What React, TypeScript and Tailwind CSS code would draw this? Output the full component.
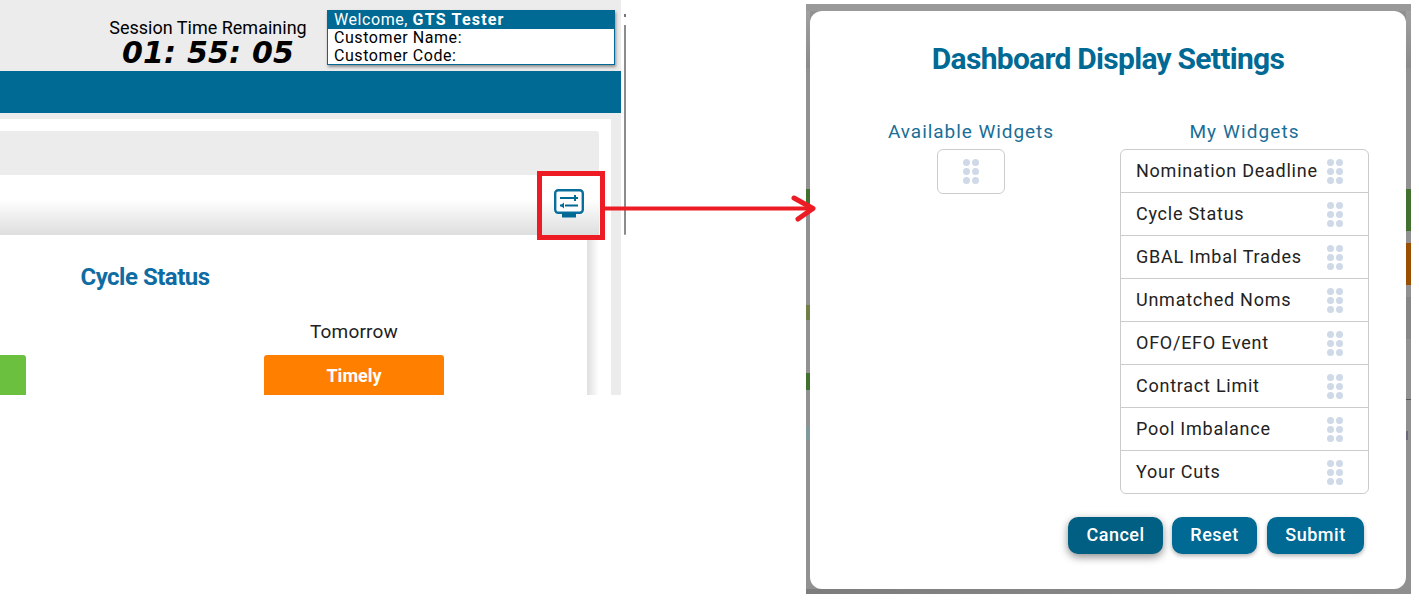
const widgets = [
  "Nomination Deadline",
  "Cycle Status",
  "GBAL Imbal Trades",
  "Unmatched Noms",
  "OFO/EFO Event",
  "Contract Limit",
  "Pool Imbalance",
  "Your Cuts",
];

function DragDots() {
  return (
    <div className="grid grid-cols-2 gap-[2px]">
      {[0, 1, 2, 3, 4, 5].map((i) => (
        <span key={i} className="block h-[7px] w-[7px] rounded-full bg-[#cfd9e8]" />
      ))}
    </div>
  );
}

function DisplayIcon() {
  return (
    <svg width="30" height="30" viewBox="0 0 30 30" fill="none">
      <rect x="1.2" y="1.2" width="27.6" height="22.6" rx="3" fill="#fff" stroke="#0a6e9c" strokeWidth="2.4" />
      <rect x="8" y="24" width="14" height="4.5" rx="0.5" fill="#006994" />
      <path d="M6 9h14M6 16.5h3M11 16.5h13" stroke="#006994" strokeWidth="2" />
      <path d="M21 6v6" stroke="#006994" strokeWidth="2" />
      <path d="M22 9h2" stroke="#006994" strokeWidth="2" />
      <path d="M10 13.5v6L6.5 16.5z" fill="#006994" />
    </svg>
  );
}

function PortalCapture() {
  return (
    <div className="flex h-[395px] w-[621px] flex-col bg-[#ececec] font-['Roboto',sans-serif]">
      <div className="flex h-[71px] items-start justify-end pr-[6px] pt-[10px]">
        <div className="mr-[19px] flex w-[200px] flex-col items-center text-black">
          <div className="mt-[7px] text-[18px] leading-[21px]">Session Time Remaining</div>
          <div className="font-['DejaVu_Sans',sans-serif] text-[30px] leading-[30px] font-bold italic tracking-[0.2px] whitespace-nowrap">
            01: 55: 05
          </div>
        </div>
        <div className="h-[55px] w-[288px] border border-[#006994] bg-white text-[16px] leading-[18px] tracking-[0.57px] text-black shadow-[1px_2px_3px_rgba(0,0,0,0.4)]">
          <div className="h-[18px] bg-[#006994] pl-[6px] text-white">
            Welcome, <span className="font-bold tracking-[1.2px]">GTS Tester</span>
          </div>
          <div className="pl-[6px]">Customer Name:</div>
          <div className="pl-[6px]">Customer Code:</div>
        </div>
      </div>
      <div className="h-[42px] bg-[#006994]" />
      <div className="h-[6px]" />
      <div className="mr-[10px] flex flex-1 flex-col bg-white pr-[12px] pt-[12px]">
        <div className="h-[44px] shrink-0 rounded-tr-[3px] bg-[#ececec]" />
        <div className="flex h-[60px] shrink-0 items-start justify-end bg-gradient-to-b from-white from-40% to-[#dedede] pr-[15px] pt-[14px]">
          <DisplayIcon />
        </div>
        <div className="flex flex-1">
          <div className="flex-1 bg-white">
            <div className="pr-[297px] pt-[29px] text-center text-[24px] leading-[26px] font-bold tracking-[-0.5px] text-[#0f6ca3]">
              Cycle Status
            </div>
            <div className="flex items-start justify-between pt-[31px]">
              <div className="mt-[34px] h-[40px] w-[26px] rounded-tr-[3px] bg-[#6cc040]" />
              <div className="mr-[143px] flex w-[180px] flex-col items-center">
                <div className="text-[19px] leading-[21px] tracking-[0.2px] text-[#222]">Tomorrow</div>
                <div className="mt-[13px] flex h-[40px] w-[180px] items-center justify-center rounded-t-[3px] bg-[#ff8000] text-[18px] font-bold text-white">
                  Timely
                </div>
              </div>
            </div>
          </div>
          <div className="w-[12px] bg-gradient-to-r from-[#dfdfdf] to-white" />
        </div>
      </div>
    </div>
  );
}

function ScrollTrack() {
  return (
    <div className="ml-[3px] flex h-[395px] w-[2px] flex-col">
      <div className="mt-[14px] h-[3px] w-[2px] bg-[#777]" />
      <div className="h-[8px]" />
      <div className="h-[210px] w-[2px] rounded-b-[1px] bg-[#8c8c8c]" />
    </div>
  );
}

function LeftStrip() {
  return (
    <div className="flex w-[4px] flex-col bg-[#919191]">
      <div className="h-[57px] bg-gradient-to-b from-[#a0a0a0] to-[#8a8a8a]" />
      <div className="h-[121px]" />
      <div className="h-[20px] bg-[#42702e]" />
      <div className="h-[96px]" />
      <div className="h-[15px] bg-[#6f7f45]" />
      <div className="h-[53px]" />
      <div className="h-[17px] bg-[#42702e]" />
      <div className="h-[37px]" />
      <div className="h-[13px] bg-[#7f9a9c]" />
    </div>
  );
}

function RightStrip() {
  return (
    <div className="flex w-[5px] flex-col bg-[#919191]">
      <div className="h-[57px] bg-gradient-to-b from-[#a0a0a0] to-[#8a8a8a]" />
      <div className="h-[121px]" />
      <div className="h-[42px] bg-[#42702e]" />
      <div className="h-[12px]" />
      <div className="h-[42px] bg-[#9a4f00]" />
      <div className="h-[12px]" />
      <div className="h-[42px] bg-[#878787]" />
      <div className="h-[60px]" />
      <div className="h-px bg-[#555]" />
      <div className="h-[31px]" />
      <div className="h-[9px] w-[2px] bg-[#6a6a7c]" />
    </div>
  );
}

function SettingsModal() {
  return (
    <div className="flex h-[590px] w-[605px] flex-col bg-[#919191] font-['Roboto',sans-serif]">
      <div className="h-[7px] shrink-0 bg-[#999]" />
      <div className="flex h-[578px]">
        <LeftStrip />
        <div className="flex w-[596px] flex-col rounded-[12px] bg-white">
          <h2 className="pt-[29px] text-center text-[30px] leading-[38px] font-bold tracking-[-0.72px] text-[#006994]">
            Dashboard Display Settings
          </h2>
          <div className="mt-[43px] flex items-start">
            <div className="ml-[78px] flex w-[166px] flex-col items-center">
              <div className="text-[19px] leading-[22px] tracking-[0.95px] whitespace-nowrap text-[#1a6e96]">Available Widgets</div>
              <div className="mt-[6px] flex h-[45px] w-[68px] items-center justify-center rounded-[6px] border border-[#cccccc]">
                <DragDots />
              </div>
            </div>
            <div className="ml-[66px] flex w-[249px] flex-col items-center">
              <div className="text-[19px] leading-[22px] tracking-[1.1px] text-[#1a6e96]">My Widgets</div>
              <div className="mt-[6px] w-[249px] rounded-[6px] border border-[#cccccc]">
                {widgets.map((name) => (
                  <div
                    key={name}
                    className="flex h-[43px] items-center justify-between border-b border-[#cccccc] pl-[15px] pr-[25px] text-[18px] tracking-[0.75px] whitespace-nowrap text-[#222] last:h-[42px] last:border-b-0"
                  >
                    <span className="mb-[2px]">{name}</span>
                    <DragDots />
                  </div>
                ))}
              </div>
            </div>
          </div>
          <div className="mt-[23px] flex justify-end gap-[9px] pr-[42px] text-[18px] font-medium tracking-[0.5px] text-white">
            <button className="h-[37px] w-[95px] rounded-[10px] bg-[#005f82] pb-[2px] shadow-[0_3px_8px_rgba(0,0,0,0.45)]">Cancel</button>
            <button className="h-[37px] w-[85px] rounded-[10px] bg-[#006994] pb-[2px] shadow-[0_2px_4px_rgba(0,0,0,0.3)]">Reset</button>
            <button className="ml-px h-[37px] w-[97px] rounded-[10px] bg-[#006994] pb-[2px] shadow-[0_2px_4px_rgba(0,0,0,0.3)]">Submit</button>
          </div>
        </div>
        <RightStrip />
      </div>
      <div className="h-[5px] shrink-0 bg-gradient-to-r from-[#7d7d7d] to-[#8f8f8f]" />
    </div>
  );
}

function Callout() {
  return (
    <>
      <div className="absolute left-[537px] top-[171px] h-[69px] w-[68px] border-[5px] border-[#ed1c24]" />
      <svg className="absolute left-[605px] top-[190px]" width="212" height="36" viewBox="0 0 212 36" fill="none">
        <path d="M0 18.5H208" stroke="#ed1c24" strokeWidth="4" />
        <path d="M189 8L208 18.5L193 29" stroke="#ed1c24" strokeWidth="5" strokeLinecap="round" strokeLinejoin="round" />
      </svg>
    </>
  );
}

export default function App() {
  return (
    <div className="relative h-[607px] w-[1419px] overflow-hidden bg-white">
      <div className="flex items-start">
        <PortalCapture />
        <ScrollTrack />
        <div className="ml-[180px] mt-[4px]">
          <SettingsModal />
        </div>
      </div>
      <Callout />
    </div>
  );
}
